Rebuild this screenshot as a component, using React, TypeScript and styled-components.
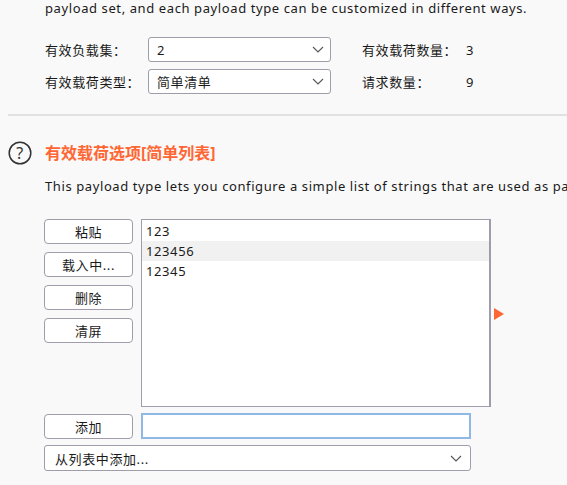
import React from "react";
import styled, { createGlobalStyle } from "styled-components";

const Global = createGlobalStyle`
  html, body { margin: 0; padding: 0; background: #f9f9f9; }
  body {
    font-family: "Noto Sans", "Noto Sans CJK SC", sans-serif;
    font-size: 13px;
    letter-spacing: 0.6px;
    color: #1a1a1a;
    overflow: hidden;
  }
`;

const Page = styled.div`
  width: 567px;
  height: 485px;
  overflow: hidden;
  position: relative;
`;

const Intro = styled.div`
  padding-left: 45px;
  margin-top: -3px;
  height: 22px;
  line-height: 22px;
  white-space: nowrap;
`;

const SetupGrid = styled.div`
  display: grid;
  grid-template-columns: 103px 183px 31px 104px auto;
  row-gap: 7px;
  align-items: center;
  padding-left: 45px;
  margin-top: 18px;
`;

const Label = styled.span`
  white-space: nowrap;
`;

const SelectBox = styled.div`
  box-sizing: border-box;
  height: 25px;
  border: 1px solid #a09cab;
  border-radius: 3px;
  background: #fff;
  display: flex;
  align-items: center;
  justify-content: space-between;
  padding: 0 6px 0 8px;
  white-space: nowrap;
`;

const Separator = styled.div`
  margin: 20px 0 0 8px;
  height: 2px;
  background: #e1e1e1;
`;

const TitleRow = styled.div`
  display: flex;
  align-items: center;
  gap: 13px;
  margin-top: 25px;
  padding-left: 8px;
`;

const Title = styled.h2`
  margin: 0;
  font-size: 16px;
  font-weight: 700;
  letter-spacing: 0;
  color: #ff6633;
  line-height: 22px;
  white-space: nowrap;
`;

const Desc = styled.div`
  padding-left: 45px;
  margin-top: 11px;
  line-height: 20px;
  white-space: nowrap;
`;

const Editor = styled.div`
  display: grid;
  grid-template-columns: 89px 350px auto;
  column-gap: 8px;
  padding-left: 44px;
  margin-top: 23px;
  align-items: start;
`;

const ButtonCol = styled.div`
  display: flex;
  flex-direction: column;
  gap: 8px;
`;

const Btn = styled.button`
  box-sizing: border-box;
  width: 89px;
  height: 25px;
  border: 1px solid #a09cab;
  border-radius: 4px;
  background: #fff;
  font-family: "Noto Sans", "Noto Sans CJK SC", sans-serif;
  font-size: 13px;
  letter-spacing: 0.6px;
  color: #1a1a1a;
  padding: 0;
  cursor: pointer;
`;

const ListBox = styled.div`
  box-sizing: border-box;
  height: 188px;
  border: 1px solid #a09cab;
  border-right-width: 2px;
  background: #fff;
  padding-top: 1px;
`;

const ListItem = styled.div<{ $selected?: boolean }>`
  height: 20px;
  line-height: 20px;
  padding-left: 4px;
  background: ${(p) => (p.$selected ? "#f1f1f1" : "transparent")};
`;

const Arrow = styled.div`
  width: 0;
  height: 0;
  border-top: 6px solid transparent;
  border-bottom: 6px solid transparent;
  border-left: 10px solid #ff6633;
  margin-top: 89px;
  margin-left: -5px;
`;

const AddRow = styled.div`
  display: grid;
  grid-template-columns: 89px 330px;
  column-gap: 8px;
  align-items: center;
  padding-left: 44px;
  margin-top: 6px;
`;

const TextInput = styled.input`
  box-sizing: border-box;
  height: 26px;
  border: 2px solid #8fb8e4;
  background: #fff;
  outline: none;
  font-family: inherit;
  font-size: 13px;
`;

const FromList = styled(SelectBox)`
  margin: 6px 0 0 44px;
  width: 427px;
  height: 26px;
  padding-left: 10px;
  padding-right: 8px;
`;

const Chevron = () => (
  <svg width="12" height="7" viewBox="0 0 12 7">
    <polyline points="1,1 6,6 11,1" fill="none" stroke="#555" strokeWidth="1.1" />
  </svg>
);

const HelpIcon = () => (
  <svg width="24" height="24" viewBox="0 0 24 24">
    <circle cx="12" cy="12" r="10.8" fill="none" stroke="#333" strokeWidth="1.5" />
    <text
      x="12"
      y="17.5"
      textAnchor="middle"
      fontSize="16"
      fontFamily="'Noto Sans', sans-serif"
      fill="#333"
    >
      ?
    </text>
  </svg>
);

export default function App() {
  return (
    <Page>
      <Global />
      <Intro>payload set, and each payload type can be customized in different ways.</Intro>
      <SetupGrid>
        <Label>有效负载集：</Label>
        <SelectBox>
          <span>2</span>
          <Chevron />
        </SelectBox>
        <span />
        <Label>有效载荷数量：</Label>
        <Label>3</Label>
        <Label>有效载荷类型：</Label>
        <SelectBox>
          <span>简单清单</span>
          <Chevron />
        </SelectBox>
        <span />
        <Label>请求数量：</Label>
        <Label>9</Label>
      </SetupGrid>
      <Separator />
      <TitleRow>
        <HelpIcon />
        <Title>有效载荷选项[简单列表]</Title>
      </TitleRow>
      <Desc>This payload type lets you configure a simple list of strings that are used as payloads.</Desc>
      <Editor>
        <ButtonCol>
          <Btn>粘贴</Btn>
          <Btn>载入中...</Btn>
          <Btn>删除</Btn>
          <Btn>清屏</Btn>
        </ButtonCol>
        <ListBox>
          <ListItem>123</ListItem>
          <ListItem $selected>123456</ListItem>
          <ListItem>12345</ListItem>
        </ListBox>
        <Arrow />
      </Editor>
      <AddRow>
        <Btn>添加</Btn>
        <TextInput />
      </AddRow>
      <FromList>
        <span>从列表中添加...</span>
        <Chevron />
      </FromList>
    </Page>
  );
}
